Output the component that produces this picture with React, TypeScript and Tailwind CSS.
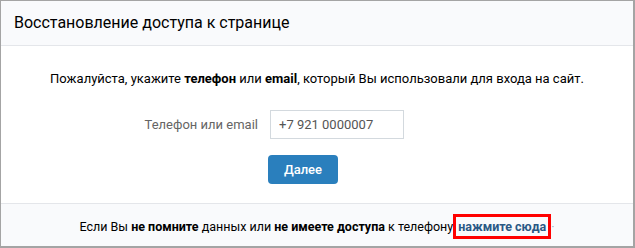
import React from "react";

const App = () => {
  return (
    <div className="w-[635px] h-[248px] flex flex-col border-l border-t border-r-2 border-b-2 border-[#a4a4a4] bg-white font-['Roboto',sans-serif] text-[13px] text-black">
      <div className="h-[45px] shrink-0 flex items-center px-[13px] bg-[#f9fafc] border-b border-[#e4e6ea] text-[16px]">
        Восстановление доступа к странице
      </div>
      <div className="flex-1 flex flex-col bg-white">
        <p className="pt-[25px] text-center leading-[16px]">
          Пожалуйста, укажите <b className="font-bold">телефон</b> или{" "}
          <b className="font-bold">email</b>, который Вы использовали для входа на сайт.
        </p>
        <div className="mt-[23px] flex items-center">
          <label className="w-[269px] pr-[12px] text-right text-[#656565]">
            Телефон или email
          </label>
          <input
            className="w-[134px] h-[29px] px-[8px] border border-[#d3d9de] text-[13px] text-[#555] outline-none"
            defaultValue="+7 921 0000007"
          />
        </div>
        <div className="mt-[16px] pl-[267px]">
          <button className="w-[70px] h-[29px] rounded-[4px] bg-[#2a7fbd] text-white font-medium text-[13px]">
            Далее
          </button>
        </div>
      </div>
      <div className="h-[43px] shrink-0 flex items-center justify-center pt-[3px] bg-[#f9fafc] border-t border-[#e4e6ea] text-[12.5px]">
        <span>
          Если Вы <b className="font-bold">не помните</b> данных или{" "}
          <b className="font-bold">не имеете доступа</b> к телефону
          <span className="inline-block border-[3px] border-[#ff0000] px-[2px] leading-[19px] font-bold text-[#2a5885]">
            нажмите сюда
          </span>
          <span className="text-[#9bb4cf]">·</span>
        </span>
      </div>
    </div>
  );
};

export default App;
